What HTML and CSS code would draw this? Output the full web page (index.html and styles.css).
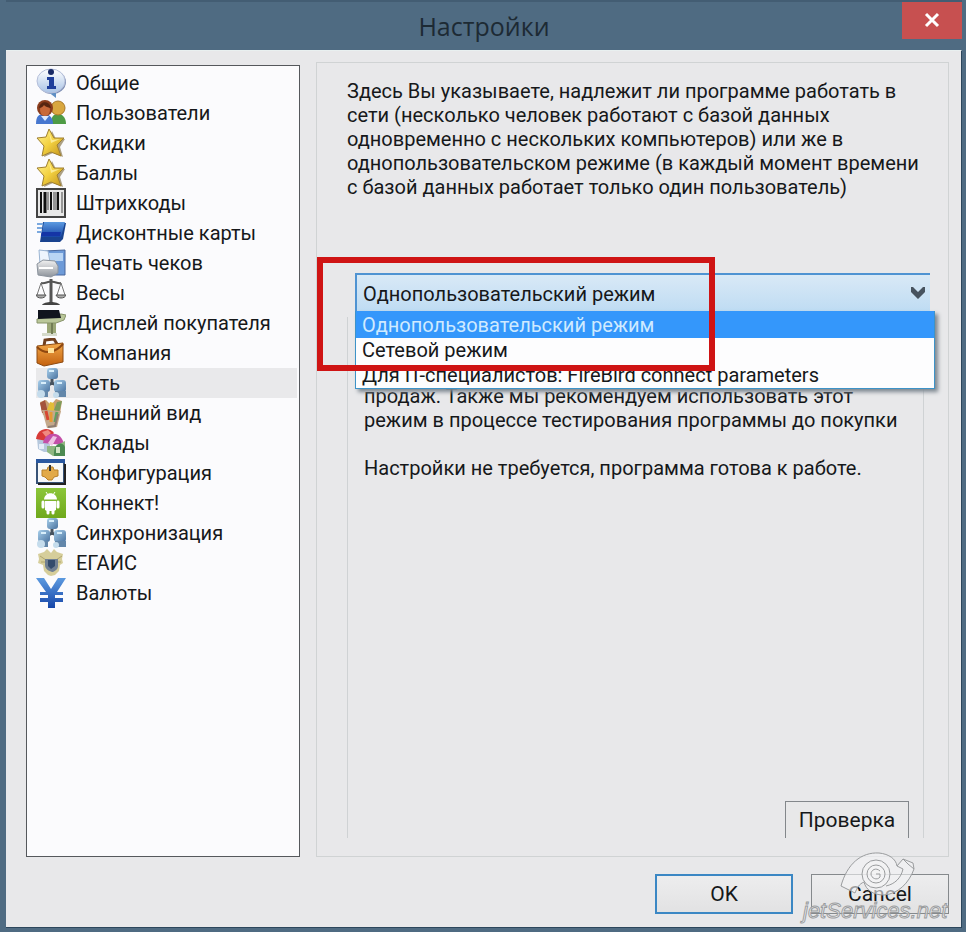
FILE: index.html
```html
<!DOCTYPE html>
<html lang="ru">
<head>
  <meta charset="UTF-8">
  <meta name="viewport" content="width=device-width, initial-scale=1.0">
  <title>Настройки</title>
  <link rel="stylesheet" href="styles.css">
</head>
<body>
  <svg class="defs" aria-hidden="true">
    <defs>
      <linearGradient id="g-white" x2="0" y2="1"><stop offset="0" stop-color="#fff"/><stop offset="1" stop-color="#a9c3e6"/></linearGradient>
      <linearGradient id="g-gold" x2="1" y2="1"><stop offset="0" stop-color="#fff39a"/><stop offset=".5" stop-color="#f3d140"/><stop offset="1" stop-color="#c0901c"/></linearGradient>
      <linearGradient id="g-blue" x2="0" y2="1"><stop offset="0" stop-color="#5c9ae0"/><stop offset="1" stop-color="#1646a8"/></linearGradient>
      <linearGradient id="g-node" x2="1" y2="1"><stop offset="0" stop-color="#a9d0ec"/><stop offset="1" stop-color="#4a73a0"/></linearGradient>
      <linearGradient id="g-bag" x2="0" y2="1"><stop offset="0" stop-color="#f3a94a"/><stop offset="1" stop-color="#c3610f"/></linearGradient>
      <linearGradient id="g-green" x2="0" y2="1"><stop offset="0" stop-color="#8cc63a"/><stop offset="1" stop-color="#6fa81c"/></linearGradient>
      <linearGradient id="g-grey" x2="0" y2="1"><stop offset="0" stop-color="#f2f2f2"/><stop offset="1" stop-color="#8d939b"/></linearGradient>
    </defs>
    <symbol id="i-star" viewBox="0 0 30 30">
      <path d="M16 3l4 8 9 0-5 8 3 10-10-4-9 4 2-10-6-7 9-2z" fill="#8a7950" opacity=".7"/>
      <path d="M13 1l5 9 10 0-7 7 4 11-10-4-9 4 2-10-7-8 9-1z" fill="url(#g-gold)" stroke="#a08030"/>
      <path d="M13 4l3 8 8-1-9 4z" fill="#fff7b8" opacity=".7"/>
    </symbol>
    <symbol id="i-net" viewBox="0 0 30 30">
      <path d="M16 10v7M9 19l7-4 8 4" fill="none" stroke="#46525e" stroke-width="3"/>
      <rect x="11" y="0" width="11" height="11" rx="3" fill="url(#g-node)"/>
      <rect x="2" y="12" width="12" height="12" rx="3" fill="url(#g-node)"/>
      <rect x="18" y="12" width="12" height="12" rx="3" fill="url(#g-node)"/>
      <path d="M3 23h9v6H3zM19 23h11v6H19z" fill="#6387aa"/>
      <circle cx="5" cy="26" r="4" fill="#c5dcec"/><circle cx="20" cy="27" r="3" fill="#c5dcec"/>
      <path d="M13 3h5M5 15h5M21 15h5" stroke="#d8eefb" stroke-width="2"/>
    </symbol>
  </svg>

  <header class="titlebar">
    <h1>Настройки</h1>
    <button class="close" aria-label="Закрыть">
      <svg viewBox="0 0 16 16"><path d="M2 2l12 12M14 2L2 14"/></svg>
    </button>
  </header>

  <main class="window">
    <div class="content">
      <nav class="sections">
        <button class="section">
          <svg viewBox="0 0 30 30"><ellipse cx="16" cy="14" rx="14" ry="12" fill="#7f8fb5"/><path d="M11 23l9 7v-7z" fill="#5f8fc4"/><ellipse cx="15" cy="13" rx="14" ry="12" fill="url(#g-white)" stroke="#b5bfda"/><circle cx="15" cy="4" r="3" fill="#182a66"/><path d="M11 9h7v9h2v3h-9v-3h2v-6h-2z" fill="#1f3f9b"/></svg>
          Общие
        </button>
        <button class="section">
          <svg viewBox="0 0 30 30"><path d="M15 26c0-8 3-10 7-10s8 3 8 10z" fill="#4e9b45"/><circle cx="22" cy="10" r="7" fill="#d9a73f" stroke="#a8782a"/><path d="M0 26c0-8 3-10 8-10s9 3 9 10z" fill="#4777cf"/><path d="M5 18l4 5 4-5z" fill="#dce9ff"/><circle cx="9" cy="10" r="8" fill="#8b3d1d"/><ellipse cx="9" cy="12" rx="5" ry="6" fill="#c8693a"/><path d="M3 10c1-7 10-8 12 0-5-1-6-2-7-3-1 2-3 3-5 3z" fill="#572611"/></svg>
          Пользователи
        </button>
        <button class="section"><svg><use href="#i-star"/></svg>Скидки</button>
        <button class="section"><svg><use href="#i-star"/></svg>Баллы</button>
        <button class="section">
          <svg viewBox="0 0 30 30"><path d="M1 1h28v28H1z" fill="#e8e8e8" stroke="#444" stroke-width="2"/><path d="M5 4v21M15 4v18M22 4v18" stroke="#111" stroke-width="2"/><path d="M9 4v21" stroke="#111" stroke-width="3"/><path d="M12 4v18M18 4v18M20 4v18M26 4v21" stroke="#444"/></svg>
          Штрихкоды
        </button>
        <button class="section">
          <svg viewBox="0 0 30 30"><path d="M7 4l23 1-3 16-3 3H4z" fill="#19438f"/><path d="M8 4h21l-4 15H5z" fill="url(#g-blue)"/><path d="M6 14h19l-1 4H5z" fill="#1535a6"/><path d="M1 6h6M1 10h5M1 14h4" stroke="#7ba9df" stroke-width="2"/></svg>
          Дисконтные карты
        </button>
        <button class="section">
          <svg viewBox="0 0 30 30"><path d="M9 3l20-1v25H16z" fill="#6d9ad8" stroke="#48679d"/><path d="M12 5h15v8H12z" fill="#b9d5f4"/><path d="M3 2l9 1 2 11-10 2z" fill="#eef5fd" stroke="#9ab4d2"/><path d="M1 16l6-4 12 1 3 5v7l-7 4-13-2z" fill="url(#g-grey)" stroke="#8b939d"/><path d="M3 20h14" stroke="#fff" stroke-width="2"/></svg>
          Печать чеков
        </button>
        <button class="section">
          <svg viewBox="0 0 30 30"><path d="M15 1v25" stroke="#555" stroke-width="3"/><path d="M5 5c5 1 6-2 10-1 4-1 6 2 10 1" fill="none" stroke="#555" stroke-width="2"/><path d="M5 5L1 17M5 5l4 12M25 5l-4 12M25 5l4 12" stroke="#777"/><path d="M0 17h10c-1 4-9 4-10 0zM20 17h10c-1 4-9 4-10 0z" fill="#aaa" stroke="#555"/><path d="M6 27c2-4 16-4 18 0z" fill="#444"/></svg>
          Весы
        </button>
        <button class="section">
          <svg viewBox="0 0 30 30"><path d="M11 13h9v13h-9z" fill="#9ba777"/><path d="M6 25h15v3H6z" fill="#d5dacb"/><path d="M1 11l24-5 5 1-2 5-8 3H1z" fill="#bac79a" stroke="#87936a"/><path d="M2 2h21l2 8-23 1z" fill="#11151e"/><path d="M16 15v11" stroke="#727d55" stroke-width="2"/></svg>
          Дисплей покупателя
        </button>
        <button class="section">
          <svg viewBox="0 0 30 30"><path d="M8 8l1-6 9-1 3 5" fill="none" stroke="#704020" stroke-width="3"/><path d="M1 8l26-3v19l-19 4-7-3z" fill="url(#g-bag)" stroke="#8d4a12"/><path d="M1 9c8 8 18 6 26-3" fill="none" stroke="#8e4710" stroke-width="2"/><path d="M12 10h6v5h-6z" fill="#ffe39b"/></svg>
          Компания
        </button>
        <button class="section selected" aria-current="page"><svg><use href="#i-net"/></svg>Сеть</button>
        <button class="section">
          <svg viewBox="0 0 30 30"><path d="M4 4l6-2 5 5 5-6 6 2-2 13-17 1z" fill="#c9a071"/><path d="M4 5l5-3 3 13H6z" fill="#a4533c"/><path d="M11 12l3-8 4 1v9z" fill="#e3bd39"/><path d="M18 12l3-8 5-1-3 12z" fill="#7d9c5c"/><path d="M6 12l19 1-4 16-10 1z" fill="#c4a98b"/><path d="M10 13l2 9" stroke="#d74731" stroke-width="3"/><path d="M15 14v10" stroke="#e79a33" stroke-width="3"/><path d="M21 14l-2 10" stroke="#5ba35e" stroke-width="3"/><path d="M22 16l-3 12-7 1" fill="none" stroke="#8d7d72" stroke-width="2"/></svg>
          Внешний вид
        </button>
        <button class="section">
          <svg viewBox="0 0 30 30"><path d="M1 10h13v14l-6 0-6-3z" fill="#b6c8dd"/><path d="M0 11C1 0 13-2 18 5l-7 8z" fill="#d83b38"/><path d="M6 4l6-2 3 3-5 4z" fill="#f08a80"/><path d="M7 15C9 4 22 3 26 11l3 6-12-1z" fill="#c34fa8"/><path d="M12 15l5-7 4 1-5 9z" fill="#efc3e4"/><path d="M11 18h9l9-5v15H17l-6-4z" fill="#8fb781"/><path d="M18 28c-1-14 9-15 11-9v9z" fill="#4c8a52"/><path d="M20 19h4v6h-4z" fill="#d2e6c5"/><path d="M3 16h5v5H3z" fill="#e4edf8"/></svg>
          Склады
        </button>
        <button class="section">
          <svg viewBox="0 0 30 30"><path d="M1 3h27v22H1z" fill="#f7f8f8" stroke="#385377" stroke-width="2"/><path d="M0 1h29v4H0z" fill="#2a58a0"/><path d="M2 26h27V6" fill="none" stroke="#222" stroke-width="2"/><path d="M6 12l5 0 1-3h5l1 3 4 0v6l-4 1-2 3h-4l-3-3-3-1z" fill="#e2aa48" stroke="#b98128"/><path d="M14 7v6" stroke="#333" stroke-width="2"/></svg>
          Конфигурация
        </button>
        <button class="section">
          <svg viewBox="0 0 30 30"><path d="M0 0h30v30H0z" fill="url(#g-green)"/><path d="M8 12c0-9 13-9 13 0z" fill="#fff"/><path d="M10 4l2 3M19 4l-2 3" stroke="#fff"/><path d="M7 14v5M22 14v5M12 22v3M17 22v3" stroke="#fff" stroke-width="3" stroke-linecap="round"/><path d="M9 13h11v9l-2 1h-7l-2-1z" fill="#fff"/><path d="M8 12h13" stroke="#7db32c"/></svg>
          Коннект!
        </button>
        <button class="section"><svg><use href="#i-net"/></svg>Синхронизация</button>
        <button class="section">
          <svg viewBox="0 0 30 30"><path d="M15 5l-4-4-3 3-6 2 1 5-1 4 5 2 1 6 4 4 3 1 4-1 4-4 1-6 3-2-1-4 1-5-6-2-3-3z" fill="#d6ce9b"/><path d="M4 8l6 4M26 8l-6 4M5 14h6M25 14h-5" stroke="#b0a66f"/><path d="M9 11h13v7c0 4-5 6-6 6-3-1-7-3-7-7z" fill="#718092"/><path d="M12 12h7v6l-4 3-3-3z" fill="#344c6c"/></svg>
          ЕГАИС
        </button>
        <button class="section">
          <svg viewBox="0 0 30 30"><path d="M0 0h8l7 11 7-11h8l-9 14h6v3h-8v3h8v4h-8v6h-7v-6H4v-4h8v-3H4v-3h6z" fill="url(#g-blue)"/></svg>
          Валюты
        </button>
      </nav>

      <section class="panel">
        <p class="intro">Здесь Вы указываете, надлежит ли программе работать в сети (несколько человек работают с базой данных одновременно с нескольких компьютеров) или же в однопользовательском режиме (в каждый момент времени с базой данных работает только один пользователь)</p>

        <div class="combo">
          <select class="mode" aria-label="Режим работы">
            <option>Однопользовательский режим</option>
          </select>
          <svg class="arrow" viewBox="0 0 14 12"><path d="M0 0l2 0 5 5 5-5 2 0v5l-7 7-7-7z"/></svg>
          <ul class="options">
            <li class="active">Однопользовательский режим</li>
            <li>Сетевой режим</li>
            <li>Для IT-специалистов: FireBird connect parameters</li>
          </ul>
          <div class="marker"></div>
        </div>

        <div class="details">
          <p>продаж. Также мы рекомендуем использовать этот режим в процессе тестирования программы до покупки</p>
          <p>Настройки не требуется, программа готова к работе.</p>
          <button class="check">Проверка</button>
        </div>
      </section>
    </div>

    <footer class="actions">
      <button class="action primary">OK</button>
      <button class="action">Cancel</button>
      <svg class="watermark" viewBox="0 0 160 72">
        <path d="M44 34C50 12 64 0 82 1c10 1 17 6 18 13l6-7 10 4 1 6c-5 14-16 25-30 26-11 0-18-5-20-13-5 2-7 6-9 11z"/>
        <path d="M100 14l6 3c-2 9-8 15-17 17M106 7l5 5 6 5" class="line"/>
        <circle cx="79" cy="22" r="14"/>
        <circle cx="79" cy="22" r="9"/>
        <path d="M83 19c-4-4-9-1-9 3s6 7 9 3v-3h-4" class="line"/>
        <text x="6" y="66">jetServices.net</text>
      </svg>
    </footer>
  </main>
</body>
</html>
```
FILE: styles.css
```css
* { box-sizing: border-box; margin: 0; padding: 0; }

body {
  display: flex;
  flex-direction: column;
  min-height: 100vh;
  padding: 0 4px 4px 6px;
  background: #4f6b82;
  color: #16181a;
  font: 20px/24px Roboto, "Liberation Sans", sans-serif;
}

button, select {
  font: inherit;
  color: inherit;
}

.defs {
  position: absolute;
  width: 0;
  height: 0;
}

/* Title bar */
.titlebar {
  display: grid;
  grid-template-columns: 1fr auto 1fr;
  height: 50px;
  border-top: 2px solid #435d73;
}
.titlebar h1 {
  grid-column: 2;
  font: 25px/48px "Open Sans", sans-serif;
  color: #1d2a34;
}
.close {
  justify-self: end;
  width: 60px;
  height: 37px;
  border: 0;
  background: #c75050;
}
.close svg {
  width: 16px;
  height: 16px;
  fill: none;
  stroke: #fff;
  stroke-width: 3;
}

.window {
  flex: 1;
  display: flex;
  flex-direction: column;
  padding: 11px 12px 13px 20px;
  border: 1px solid #2c465c;
  border-width: 1px 1px 1px 0;
  border-top-color: #e9f0f0;
  background: #e8e8ea;
}
.content {
  flex: 1;
  display: flex;
  gap: 16px;
}

/* Section list */
.sections {
  flex: 0 0 274px;
  margin-top: 3px;
  padding: 2px 2px 2px 9px;
  border: 1px solid #55585c;
  background: #fbfbfd;
}
.section {
  display: flex;
  align-items: center;
  gap: 10px;
  width: 100%;
  height: 30px;
  border: 0;
  background: none;
  text-align: left;
}
.section svg {
  flex: none;
  width: 30px;
  height: 30px;
}
.section.selected {
  background: #e9e9eb;
}

/* Right panel */
.panel {
  flex: 1;
  display: flex;
  flex-direction: column;
  padding: 16px 24px 0 30px;
  border: 1px solid #d0d3d4;
}
.intro {
  margin-right: -4px;
  min-height: 194px;
}
.combo {
  position: relative;
  margin: 0 -6px 0 8px;
}
.mode {
  display: block;
  width: 100%;
  height: 38px;
  padding: 2px 6px 0;
  border: solid #4f93d2;
  border-width: 2px 0 0 2px;
  border-radius: 0;
  appearance: none;
  background: linear-gradient(#d9e9f6, #bfdcf3);
}
.arrow {
  position: absolute;
  right: 5px;
  top: 14px;
  width: 14px;
  height: 12px;
  fill: #47535f;
}
.options {
  position: absolute;
  top: 38px;
  left: 0;
  right: -5px;
  z-index: 1;
  border: 1px solid #3d93c8;
  border-top: 0;
  background: #fdfdfe;
  box-shadow: 3px 3px 4px #7d8790;
  list-style: none;
}
.options li {
  padding-left: 6px;
  line-height: 25px;
  white-space: nowrap;
}
.options .active {
  padding-top: 2px;
  background: #3497fb;
  color: #cfeaff;
}
/* Red frame around the first two modes */
.marker {
  position: absolute;
  z-index: 2;
  top: -16px;
  left: -38px;
  width: 398px;
  height: 114px;
  border: 6px solid #cf1414;
}

.details {
  flex: 1;
  display: flex;
  flex-direction: column;
  gap: 24px;
  margin: 6px 0 18px;
  padding: 67px 14px 0 16px;
  border: solid #cfd2d4;
  border-width: 0 1px;
}
.check {
  align-self: flex-end;
  width: 124px;
  height: 37px;
  margin-top: auto;
  border: solid #83878b;
  border-width: 1px 1px 0;
  background: #e8e8e9;
  font-size: 21px;
}

/* Bottom buttons */
.actions {
  position: relative;
  display: flex;
  justify-content: flex-end;
  gap: 18px;
  padding: 17px 0 0;
}
.action {
  width: 138px;
  height: 40px;
  border: 1px solid #85898c;
  background: linear-gradient(#ededee, #e2e2e3);
  font-size: 21px;
}
.action.primary {
  border: 2px solid #3b87c4;
}
.watermark {
  position: absolute;
  right: -8px;
  bottom: -10px;
  width: 160px;
  height: 72px;
  fill: #f4f4f5;
  fill-opacity: .6;
  stroke: #9a9c9e;
  pointer-events: none;
}
.watermark .line {
  fill: none;
}
.watermark text {
  font: italic 22px "Liberation Sans", sans-serif;
}
```
